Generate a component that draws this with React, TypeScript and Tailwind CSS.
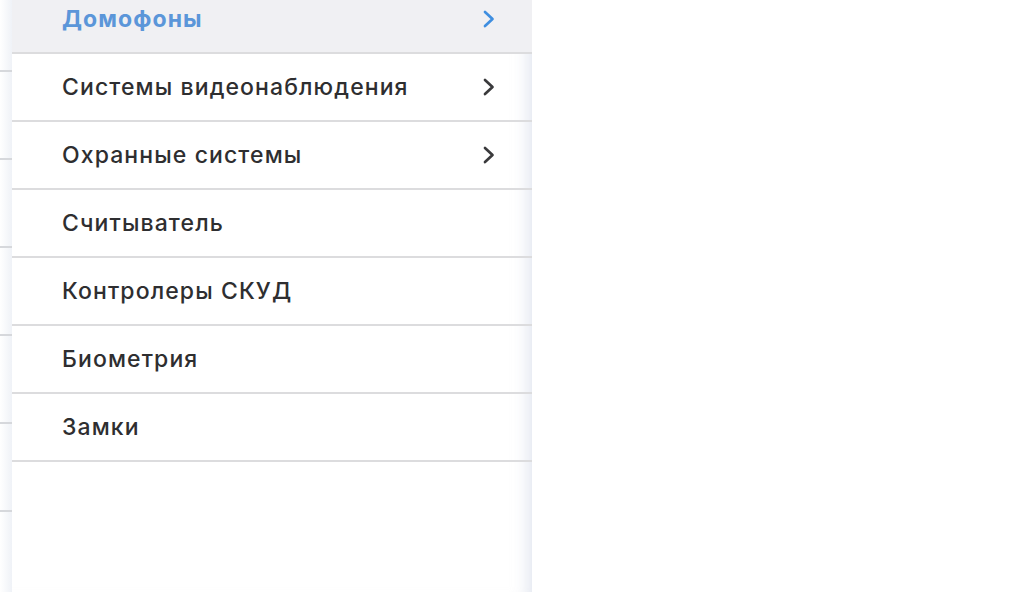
const ITEMS = [
  { label: 'Домофоны', sub: true, active: true },
  { label: 'Системы видеонаблюдения', sub: true },
  { label: 'Охранные системы', sub: true },
  { label: 'Считыватель' },
  { label: 'Контролеры СКУД' },
  { label: 'Биометрия' },
  { label: 'Замки' },
]

function Chevron({ color }: { color: string }) {
  return (
    <svg width="12" height="18" viewBox="0 0 12 18" fill="none" className={color}>
      <polyline
        points="2,2 9.5,9 2,16"
        stroke="currentColor"
        strokeWidth="2.7"
        strokeLinecap="round"
        strokeLinejoin="round"
      />
    </svg>
  )
}

export default function App() {
  return (
    <div
      className="flex h-[592px] w-full overflow-hidden bg-white"
      style={{ fontFamily: 'Inter, "Noto Sans", sans-serif' }}
    >
      {/* page behind the menu */}
      <div className="flex w-[12px] shrink-0 flex-col bg-gradient-to-r from-white to-[#eff2f7]">
        <div className="h-[72px] shrink-0 border-b-2 border-[#d6d8dc]" />
        {[0, 1, 2, 3, 4].map((i) => (
          <div key={i} className="h-[88px] shrink-0 border-b-2 border-[#d6d8dc]" />
        ))}
      </div>

      {/* menu */}
      <div className="flex w-[520px] shrink-0 flex-col bg-white shadow-[inset_-18px_0_16px_-14px_rgba(200,208,225,0.55)]">
        <div className="-mt-[14px]">
          {ITEMS.map((item) => (
            <div
              key={item.label}
              className={`flex h-[68px] items-center justify-between border-b-2 border-[#dcdcde] pl-[50px] pr-[37px] ${
                item.active ? 'bg-[#f0f0f3]' : ''
              }`}
            >
              <span
                className={`text-[23px] tracking-[1.1px] ${
                  item.active ? 'font-bold text-[#5b96d9]' : 'font-medium text-[#2e2e30]'
                }`}
              >
                {item.label}
              </span>
              {item.sub && <Chevron color={item.active ? 'text-[#3f8ee0]' : 'text-[#3a3a3c]'} />}
            </div>
          ))}
        </div>
      </div>
      <div className="flex-1 bg-white" />
    </div>
  )
}
